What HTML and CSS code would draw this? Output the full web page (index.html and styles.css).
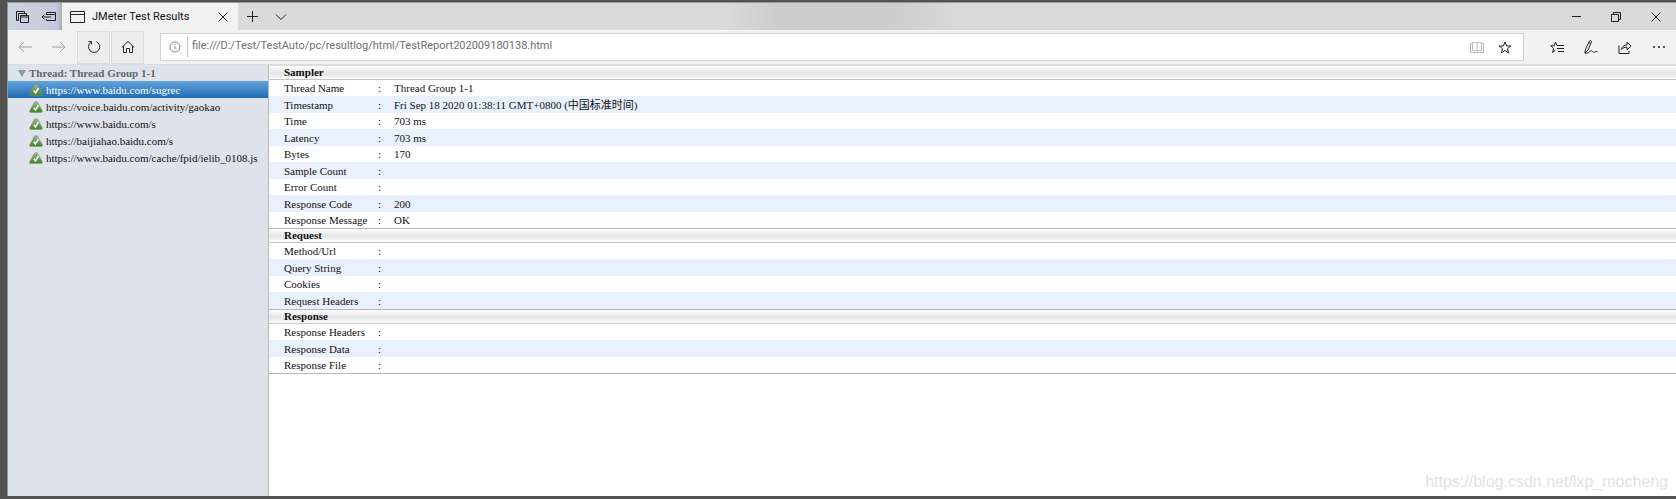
FILE: index.html
```html
<!DOCTYPE html>
<html lang="en">
<head>
    <meta charset="UTF-8">
    <meta name="viewport" content="width=device-width, initial-scale=1.0">
    <title>JMeter Test Results</title>
    <link rel="stylesheet" href="styles.css">
</head>
<body>

<div class="window">
    <!-- Tab strip -->
    <header class="titlebar">
        <div class="tab-actions">
            <button class="icon-btn" aria-label="Tabs you've set aside">
                <svg width="14" height="14" viewBox="0 0 14 14"><path d="M1.500 8.500v-7h8v2M3.500 10.500h-2v-3M3.500 10.500v-7h8v2"/><path d="M5.500 5.500h8v7h-8zM5.500 7h8"/></svg>
            </button>
            <button class="icon-btn" aria-label="Set these tabs aside">
                <svg width="15" height="12" viewBox="0 0 15 12"><path d="M5.500 4v-2.500h9v8h-9V8M5.500 3.500h9M1 6h9M3.500 3.500L1 6l2.500 2.500"/></svg>
            </button>
        </div>
        <div class="tab">
            <svg width="15" height="12" viewBox="0 0 15 12"><path d="M.5.500h14v11H.5zM.5 3.500h14"/></svg>
            <span class="tab-title">JMeter Test Results</span>
            <button class="icon-btn tab-close" aria-label="Close tab">
                <svg width="10" height="10" viewBox="0 0 10 10"><path d="M.5.5l9 9M9.500.5l-9 9"/></svg>
            </button>
        </div>
        <button class="icon-btn new-tab" aria-label="New tab">
            <svg width="13" height="13" viewBox="0 0 13 13"><path d="M6.500 1v11M1 6.500h11"/></svg>
        </button>
        <button class="icon-btn tab-preview" aria-label="Show tab previews">
            <svg width="12" height="8" viewBox="0 0 12 8"><path d="M1 1.500l5 5 5-5"/></svg>
        </button>
        <div class="window-controls">
            <button class="icon-btn" aria-label="Minimize">
                <svg width="9" height="9" viewBox="0 0 9 9"><path d="M0 4.500h9"/></svg>
            </button>
            <button class="icon-btn" aria-label="Restore">
                <svg width="10" height="10" viewBox="0 0 10 10"><path d="M.5 2.500h7v7h-7zM2.500 2.500v-2h7v7h-2"/></svg>
            </button>
            <button class="icon-btn" aria-label="Close">
                <svg width="10" height="10" viewBox="0 0 10 10"><path d="M.5.5l9 9M9.500.5l-9 9"/></svg>
            </button>
        </div>
    </header>

    <!-- Navigation bar -->
    <nav class="toolbar">
        <button class="icon-btn nav-btn muted" aria-label="Back">
            <svg width="14" height="12" viewBox="0 0 14 12"><path d="M14 6H1M6 1L1 6l5 5"/></svg>
        </button>
        <button class="icon-btn nav-btn muted" aria-label="Forward">
            <svg width="14" height="12" viewBox="0 0 14 12"><path d="M0 6h13M8 1l5 5-5 5"/></svg>
        </button>
        <button class="icon-btn nav-btn boxed" aria-label="Refresh">
            <svg width="14" height="14" viewBox="0 0 14 14"><path d="M9.500 1.800A5.600 5.600 0 1 1 4 2.200M1.500 1.500h3v3"/></svg>
        </button>
        <button class="icon-btn nav-btn boxed" aria-label="Home">
            <svg width="14" height="14" viewBox="0 0 14 14"><path d="M.7 7.500L7 1.500l6.300 6M2.500 6v6.500h3v-4h3v4h3V6"/></svg>
        </button>
        <div class="address">
            <svg class="info" width="12" height="12" viewBox="0 0 12 12"><circle cx="6" cy="6" r="5"/><path d="M6 5.200v3.300M6 3.200v1"/></svg>
            <input type="text" aria-label="Address" value="file:///D:/Test/TestAuto/pc/resultlog/html/TestReport202009180138.html">
            <button class="icon-btn reading" aria-label="Reading view">
                <svg width="14" height="12" viewBox="0 0 14 12"><path d="M7 1.500v8.500M2.500 1.500h3L7 2l1.500-.5h3v8h-3L7 10l-1.500-.5h-3zM2.500 2.500h-2v9h13v-9h-2"/></svg>
            </button>
            <button class="icon-btn" aria-label="Add to favorites">
                <svg width="14" height="13" viewBox="0 0 14 13"><path d="M7 1l1.600 4h4.300L9.500 7.700l1.200 4.300L7 9.500 3.300 12l1.200-4.300L1.100 5h4.300z"/></svg>
            </button>
        </div>
        <div class="tools">
            <button class="icon-btn" aria-label="Favorites">
                <svg width="14" height="13" viewBox="0 0 14 13"><path d="M8.500 4.500H7L5.500 1 4.200 4.700H.7l2.900 2.600L2.500 11.500 5.500 9M7 4.500h7M7 7.500h7M8 10.500h6"/></svg>
            </button>
            <button class="icon-btn" aria-label="Add notes">
                <svg width="14" height="14" viewBox="0 0 14 14"><path d="M.8 13l1-4.500L5.500 1c.8-1 2.300-.3 1.900 1L4 10zM4.800 2.500l2 1M.8 13c1 .5 3 .3 5-1.500 2.500-2 2.500.8 4 .8 1.300 0 1.500-1.300 3.700-.5"/></svg>
            </button>
            <button class="icon-btn" aria-label="Share">
                <svg width="14" height="13" viewBox="0 0 14 13"><path d="M1 4.500v8h10V10M3.500 8.500C4 5.500 6 4 9 4V1.200L13 5 9 8.800V6.300C6.500 6.200 5 6.800 3.500 8.500z"/></svg>
            </button>
            <button class="icon-btn" aria-label="Settings and more">
                <svg class="dots" width="14" height="4" viewBox="0 0 14 4"><circle cx="2" cy="2" r="1"/><circle cx="7" cy="2" r="1"/><circle cx="12" cy="2" r="1"/></svg>
            </button>
        </div>
    </nav>

    <!-- Report -->
    <div class="report">
        <aside class="left-panel">
            <h2 class="thread">Thread: Thread Group 1-1</h2>
            <ul class="samples" id="samples"></ul>
        </aside>

        <main class="right-panel">
            <table class="details">
                <colgroup><col class="key"><col class="colon"><col></colgroup>
                <tbody class="head"><tr><th colspan="3">Sampler</th></tr></tbody>
                <tbody class="data">
                    <tr><td>Thread Name</td><td>:</td><td>Thread Group 1-1</td></tr>
                    <tr><td>Timestamp</td><td>:</td><td>Fri Sep 18 2020 01:38:11 GMT+0800 (<span lang="zh">中国标准时间</span>)</td></tr>
                    <tr><td>Time</td><td>:</td><td>703 ms</td></tr>
                    <tr><td>Latency</td><td>:</td><td>703 ms</td></tr>
                    <tr><td>Bytes</td><td>:</td><td>170</td></tr>
                    <tr><td>Sample Count</td><td>:</td><td></td></tr>
                    <tr><td>Error Count</td><td>:</td><td></td></tr>
                    <tr><td>Response Code</td><td>:</td><td>200</td></tr>
                    <tr><td>Response Message</td><td>:</td><td>OK</td></tr>
                </tbody>
                <tbody class="head"><tr><th colspan="3">Request</th></tr></tbody>
                <tbody class="data">
                    <tr><td>Method/Url</td><td>:</td><td></td></tr>
                    <tr><td>Query String</td><td>:</td><td></td></tr>
                    <tr><td>Cookies</td><td>:</td><td></td></tr>
                    <tr><td>Request Headers</td><td>:</td><td></td></tr>
                </tbody>
                <tbody class="head"><tr><th colspan="3">Response</th></tr></tbody>
                <tbody class="data last">
                    <tr><td>Response Headers</td><td>:</td><td></td></tr>
                    <tr><td>Response Data</td><td>:</td><td></td></tr>
                    <tr><td>Response File</td><td>:</td><td></td></tr>
                </tbody>
            </table>
            <div class="watermark">https://blog.csdn.net/lxp_mocheng</div>
        </main>
    </div>
</div>

<svg width="0" height="0" class="defs">
    <defs>
        <linearGradient id="green" x1="0" y1="0" x2="0" y2="1">
            <stop offset="0" stop-color="#a3b59d"/>
            <stop offset="0.5" stop-color="#6a9f58"/>
            <stop offset="1" stop-color="#3d8428"/>
        </linearGradient>
        <symbol id="ok" viewBox="0 0 14 12">
            <path d="M5.500 1Q7-.2 8.500 1L13.400 10Q13.700 11.600 12 11.600H2Q.3 11.600.6 10z" fill="url(#green)" stroke="#7d9276" stroke-width=".5"/>
            <path d="M4.800 6.800l1.700 2 3-4.800" fill="none" stroke="#fff" stroke-width="1.600"/>
        </symbol>
    </defs>
</svg>

<script>
    const samples = [
        "https://www.baidu.com/sugrec",
        "https://voice.baidu.com/activity/gaokao",
        "https://www.baidu.com/s",
        "https://baijiahao.baidu.com/s",
        "https://www.baidu.com/cache/fpid/ielib_0108.js"
    ];
    const ul = document.getElementById('samples');

    samples.forEach((url, i) => {
        const li = document.createElement('li');
        if (i === 0) li.className = 'selected';
        li.innerHTML = `<svg width="14" height="12"><use href="#ok"/></svg><a href="#">${url}</a>`;
        li.onclick = () => {
            ul.querySelector('.selected').classList.remove('selected');
            li.classList.add('selected');
        };
        ul.appendChild(li);
    });
</script>
</body>
</html>
```
FILE: styles.css
```css
* { box-sizing: border-box; }
body { margin: 0; background: #525252; font-family: "Liberation Serif", "Noto Sans CJK SC", serif; font-size: 11px; color: #111; }

.window { display: flex; flex-direction: column; height: calc(100vh - 5px); margin: 2px 0 3px 7px; border-top: 1px solid #9a9a9a; border-left: 1px solid #8e9296; background: #fff; }

/* Icons */
svg { display: block; fill: none; stroke: #222; stroke-width: 1; flex: none; }
.icon-btn { display: flex; align-items: center; justify-content: center; border: none; background: none; padding: 0; }
.defs { position: absolute; }

/* Tab strip */
.titlebar { display: flex; flex: none; height: 27px; background: linear-gradient(90deg, #dadada 0, #dadada 43%, #cdcdcd 46%, #cdcdcd 53%, #d9d9d9 57%, #d9d9d9 100%); }
.tab-actions { display: flex; width: 54px; background: linear-gradient(90deg, #cdd3e1, #c6c9d9 90%, #a9acb8); }
.tab-actions .icon-btn { width: 27px; }
.tab { display: flex; align-items: center; width: 176px; padding: 0 10px 0 8px; background: #f2f2f2; font-family: Roboto, sans-serif; font-size: 11px; }
.tab-title { flex: 1; padding-left: 7px; }
.tab-close { width: 10px; }
.new-tab { width: 28px; }
.tab-preview { width: 30px; }
.window-controls { display: flex; margin-left: auto; }
.window-controls .icon-btn { width: 40px; }

/* Navigation bar */
.toolbar { display: flex; align-items: center; flex: none; height: 35px; background: #f2f2f2; border-bottom: 1px solid #dcdcdc; }
.nav-btn { width: 34px; height: 33px; }
.muted svg { stroke: #a0a0a0; }
.boxed { width: 33px; margin-left: 1px; background: #ededed; border: 1px solid #dcdcdc; }
.address { display: flex; align-items: center; flex: 1; height: 28px; margin-left: 16px; padding: 0 4px 0 8px; background: #fff; border: 1px solid #d2d2d2; }
.address input { flex: 1; min-width: 0; height: 20px; margin-left: 6px; padding: 0 0 3px 4px; border: none; border-left: 1px solid #c4c4c4; outline: none; font-family: Roboto, sans-serif; font-size: 11px; color: #707070; }
.address .icon-btn { width: 28px; }
.info { stroke: #888; }
.reading svg { stroke: #bbb; }
.tools { display: flex; padding-left: 16px; }
.tools .icon-btn { width: 34px; height: 28px; }
.dots { fill: #222; stroke: none; }

/* Report */
.report { display: flex; flex: 1; min-height: 0; }
.left-panel { width: 261px; flex: none; background: #dee3eb; border-right: 1px solid #b8babd; }
.thread { display: flex; align-items: center; height: 16px; margin: 0; padding-left: 10px; font-size: 11px; color: #5f666d; }
.thread::before { content: ""; margin-right: 3px; border: 4px solid transparent; border-top: 7px solid #8b98a5; border-bottom: none; }
.samples { margin: 0; padding: 0; list-style: none; }
.samples li { display: flex; align-items: center; height: 17px; padding-left: 21px; cursor: pointer; }
.samples a { margin-left: 3px; color: #111; text-decoration: none; }
.samples .selected { background: linear-gradient(#65a3da, #1e6cb3); }
.samples .selected a { color: #fff; }

/* Sample details */
.right-panel { position: relative; flex: 1; }
.details { width: 100%; border-collapse: separate; border-spacing: 0; table-layout: fixed; }
.key { width: 107px; }
.colon { width: 18px; }
.details th { height: 15px; padding: 0 0 0 15px; border-top: 1px solid #b8b8b8; border-bottom: 1px solid #c4c4c4; background: linear-gradient(#fdfdfd, #e4e4e4 55%, #fdfdfd); line-height: 13px; text-align: left; }
.details .head:first-of-type th { border-top-color: #dcdcdc; }
.data tr { height: 16px; }
.data tr:nth-child(even) { height: 17px; background: #eaf1fe; }
.data td { padding: 0; line-height: 16px; }
.data td:nth-child(1) { padding-left: 15px; }
.data td:nth-child(2) { padding-left: 2px; }
.last tr:last-child td { border-bottom: 1px solid #b8b8b8; }

.watermark { position: absolute; right: 8px; bottom: 5px; font-family: "Liberation Sans", sans-serif; font-size: 16px; color: #e2e2e2; }
```
